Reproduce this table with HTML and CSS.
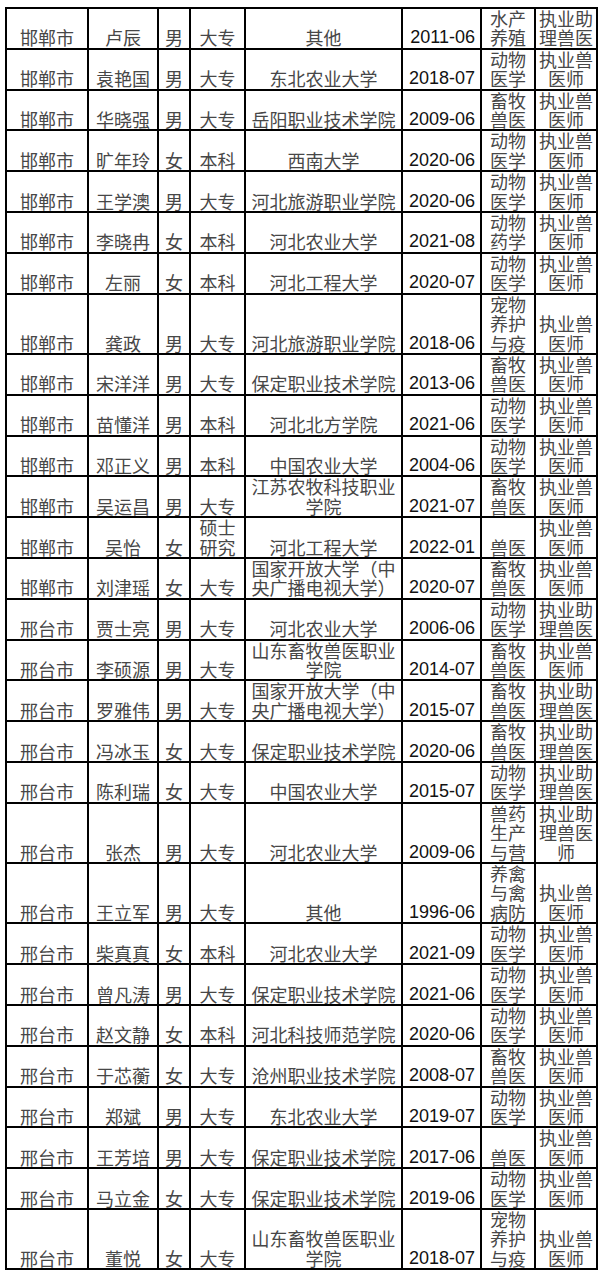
FILE: index.html
```html
<!DOCTYPE html>
<html lang="zh-CN">
<head>
<meta charset="utf-8">
<title>名单</title>
<link rel="stylesheet" href="styles.css">
</head>
<body>
<table class="roster">
  <colgroup>
    <col class="c-city"><col class="c-name"><col class="c-sex"><col class="c-edu"><col class="c-school"><col class="c-date"><col class="c-major"><col class="c-cert">
  </colgroup>
  <tbody>
    <tr><td>邯郸市</td><td>卢辰</td><td>男</td><td>大专</td><td>其他</td><td class="date">2011-06</td><td>水产养殖</td><td class="cert">执业助理兽医</td></tr>
    <tr><td>邯郸市</td><td>袁艳国</td><td>男</td><td>大专</td><td>东北农业大学</td><td class="date">2018-07</td><td>动物医学</td><td class="cert">执业兽医师</td></tr>
    <tr><td>邯郸市</td><td>华晓强</td><td>男</td><td>大专</td><td>岳阳职业技术学院</td><td class="date">2009-06</td><td>畜牧兽医</td><td class="cert">执业兽医师</td></tr>
    <tr><td>邯郸市</td><td>旷年玲</td><td>女</td><td>本科</td><td>西南大学</td><td class="date">2020-06</td><td>动物医学</td><td class="cert">执业兽医师</td></tr>
    <tr><td>邯郸市</td><td>王学澳</td><td>男</td><td>大专</td><td>河北旅游职业学院</td><td class="date">2020-06</td><td>动物医学</td><td class="cert">执业兽医师</td></tr>
    <tr><td>邯郸市</td><td>李晓冉</td><td>女</td><td>本科</td><td>河北农业大学</td><td class="date">2021-08</td><td>动物药学</td><td class="cert">执业兽医师</td></tr>
    <tr><td>邯郸市</td><td>左丽</td><td>女</td><td>本科</td><td>河北工程大学</td><td class="date">2020-07</td><td>动物医学</td><td class="cert">执业兽医师</td></tr>
    <tr><td>邯郸市</td><td>龚政</td><td>男</td><td>大专</td><td>河北旅游职业学院</td><td class="date">2018-06</td><td>宠物养护与疫</td><td class="cert">执业兽医师</td></tr>
    <tr><td>邯郸市</td><td>宋洋洋</td><td>男</td><td>大专</td><td>保定职业技术学院</td><td class="date">2013-06</td><td>畜牧兽医</td><td class="cert">执业兽医师</td></tr>
    <tr><td>邯郸市</td><td>苗懂洋</td><td>男</td><td>本科</td><td>河北北方学院</td><td class="date">2021-06</td><td>动物医学</td><td class="cert">执业兽医师</td></tr>
    <tr><td>邯郸市</td><td>邓正义</td><td>男</td><td>本科</td><td>中国农业大学</td><td class="date">2004-06</td><td>动物医学</td><td class="cert">执业兽医师</td></tr>
    <tr><td>邯郸市</td><td>吴运昌</td><td>男</td><td>大专</td><td>江苏农牧科技职业学院</td><td class="date">2021-07</td><td>畜牧兽医</td><td class="cert">执业兽医师</td></tr>
    <tr><td>邯郸市</td><td>吴怡</td><td>女</td><td>硕士研究</td><td>河北工程大学</td><td class="date">2022-01</td><td>兽医</td><td class="cert">执业兽医师</td></tr>
    <tr><td>邯郸市</td><td>刘津瑶</td><td>女</td><td>大专</td><td>国家开放大学（中央广播电视大学）</td><td class="date">2020-07</td><td>畜牧兽医</td><td class="cert">执业兽医师</td></tr>
    <tr><td>邢台市</td><td>贾士亮</td><td>男</td><td>大专</td><td>河北农业大学</td><td class="date">2006-06</td><td>动物医学</td><td class="cert">执业助理兽医</td></tr>
    <tr><td>邢台市</td><td>李硕源</td><td>男</td><td>大专</td><td>山东畜牧兽医职业学院</td><td class="date">2014-07</td><td>畜牧兽医</td><td class="cert">执业兽医师</td></tr>
    <tr><td>邢台市</td><td>罗雅伟</td><td>男</td><td>大专</td><td>国家开放大学（中央广播电视大学）</td><td class="date">2015-07</td><td>畜牧兽医</td><td class="cert">执业助理兽医</td></tr>
    <tr><td>邢台市</td><td>冯冰玉</td><td>女</td><td>大专</td><td>保定职业技术学院</td><td class="date">2020-06</td><td>畜牧兽医</td><td class="cert">执业助理兽医</td></tr>
    <tr><td>邢台市</td><td>陈利瑞</td><td>女</td><td>大专</td><td>中国农业大学</td><td class="date">2015-07</td><td>动物医学</td><td class="cert">执业助理兽医</td></tr>
    <tr><td>邢台市</td><td>张杰</td><td>男</td><td>大专</td><td>河北农业大学</td><td class="date">2009-06</td><td>兽药生产与营</td><td class="cert">执业助理兽医师</td></tr>
    <tr><td>邢台市</td><td>王立军</td><td>男</td><td>大专</td><td>其他</td><td class="date">1996-06</td><td>养禽与禽病防</td><td class="cert">执业兽医师</td></tr>
    <tr><td>邢台市</td><td>柴真真</td><td>女</td><td>本科</td><td>河北农业大学</td><td class="date">2021-09</td><td>动物医学</td><td class="cert">执业兽医师</td></tr>
    <tr><td>邢台市</td><td>曾凡涛</td><td>男</td><td>大专</td><td>保定职业技术学院</td><td class="date">2021-06</td><td>动物医学</td><td class="cert">执业兽医师</td></tr>
    <tr><td>邢台市</td><td>赵文静</td><td>女</td><td>本科</td><td>河北科技师范学院</td><td class="date">2020-06</td><td>动物医学</td><td class="cert">执业兽医师</td></tr>
    <tr><td>邢台市</td><td>于芯蘅</td><td>女</td><td>大专</td><td>沧州职业技术学院</td><td class="date">2008-07</td><td>畜牧兽医</td><td class="cert">执业兽医师</td></tr>
    <tr><td>邢台市</td><td>郑斌</td><td>男</td><td>大专</td><td>东北农业大学</td><td class="date">2019-07</td><td>动物医学</td><td class="cert">执业兽医师</td></tr>
    <tr><td>邢台市</td><td>王芳培</td><td>男</td><td>大专</td><td>保定职业技术学院</td><td class="date">2017-06</td><td>兽医</td><td class="cert">执业兽医师</td></tr>
    <tr><td>邢台市</td><td>马立金</td><td>女</td><td>大专</td><td>保定职业技术学院</td><td class="date">2019-06</td><td>动物医学</td><td class="cert">执业兽医师</td></tr>
    <tr><td>邢台市</td><td>董悦</td><td>女</td><td>大专</td><td>山东畜牧兽医职业学院</td><td class="date">2018-07</td><td>宠物养护与疫</td><td class="cert">执业兽医师</td></tr>
  </tbody>
</table>
</body>
</html>
```

FILE: styles.css
```css
html, body {
  margin: 0;
  padding: 0;
  background: #ffffff;
}

.roster {
  margin: 7px 0 0 5px;
  width: 593px;
  table-layout: fixed;
  border-collapse: collapse;
  font-family: "Noto Sans CJK SC", "Noto Sans", sans-serif;
  font-size: 18px;
  line-height: 19.4px;
  color: #474747;
}

.c-city { width: 82px; }
.c-name { width: 70px; }
.c-sex { width: 32px; }
.c-edu { width: 55px; }
.c-school { width: 157px; }
.c-date { width: 79px; }
.c-major { width: 54px; }
.c-cert { width: 62px; }

.roster td {
  border: 2px solid #000;
  padding: 0;
  text-align: center;
  vertical-align: bottom;
  word-break: break-all;
}

.roster td:nth-child(5) {
  padding: 0 2px;
}

.roster td.cert {
  padding: 0 1px;
}

.roster td.date {
  font-family: "Liberation Sans", Arial, sans-serif;
  font-size: 18px;
  color: #111;
  text-align: right;
  padding-right: 5px;
  white-space: nowrap;
}
```
